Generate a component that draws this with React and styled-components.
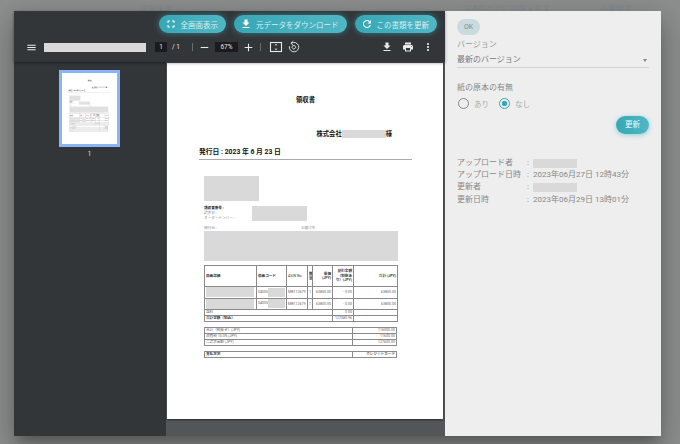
import styled, { createGlobalStyle } from "styled-components";
import {
  MdFullscreen,
  MdFileDownload,
  MdRefresh,
  MdMenu,
  MdRemove,
  MdAdd,
  MdPrint,
  MdMoreVert,
} from "react-icons/md";

const GlobalStyle = createGlobalStyle`
  html, body {
    margin: 0;
    padding: 0;
    width: 680px;
    height: 444px;
    overflow: hidden;
    background: #8d8f8f;
    font-family: Roboto, "Noto Sans CJK JP", sans-serif;
  }
  * { box-sizing: border-box; }
`;

const FitIcon = () => (
  <svg width="14" height="14" viewBox="0 0 14 14" fill="none" stroke="#e8eaed" strokeWidth="1.1">
    <rect x="1.5" y="2.5" width="11" height="9" />
    <path d="M7 3.8 L5.6 5.3 H8.4 Z M7 10.2 L5.6 8.7 H8.4 Z" fill="#e8eaed" stroke="none" />
  </svg>
);

const RotateIcon = () => (
  <svg width="14" height="14" viewBox="0 0 14 14" fill="none" stroke="#e8eaed" strokeWidth="0.9">
    <path d="M4.4 3.2 A4.7 4.7 0 1 1 2.4 6.2" />
    <path d="M6.2 1.2 L3.9 3.2 L6 5" />
    <path d="M6.8 5 L8.9 7.2 L6.8 9.4 L4.7 7.2 Z" />
  </svg>
);

const ReceiptPage = () => (
  <Sheet>
    <DocTitle>領収書</DocTitle>
    <CompanyRow>
      株式会社<Masked $w={44} $h={8} />様
    </CompanyRow>
    <IssueDate>発行日 : 2023 年 6 月 23 日</IssueDate>
    <Rule />
    <Indented>
      <Masked $w={55} $h={25} />
      <OrderRow>
        <OrderLabels>
          <b>領収書番号 :</b>
          <span>請求日 :</span>
          <span>オーダーナンバー :</span>
        </OrderLabels>
        <Masked $w={55} $h={15} />
      </OrderRow>
      <AddressLabels>
        <span>発行元 :</span>
        <span>お届け先 :</span>
      </AddressLabels>
      <Masked $w={194} $h={30} />
      <ItemTable>
        <colgroup>
          <col style={{ width: 52 }} />
          <col style={{ width: 30 }} />
          <col style={{ width: 21 }} />
          <col style={{ width: 5 }} />
          <col style={{ width: 20 }} />
          <col style={{ width: 21 }} />
          <col style={{ width: 44 }} />
        </colgroup>
        <tbody>
          <HeadRow>
            <th>商品詳細</th>
            <th>商品コード</th>
            <NormalTh>ASIN No.</NormalTh>
            <th>数量</th>
            <RightTh>単価 (JPY)</RightTh>
            <RightTh>割引金額（税抜あり）(JPY)</RightTh>
            <RightTh>合計 (JPY)</RightTh>
          </HeadRow>
          {[0, 1].map((i) => (
            <ItemRow key={i}>
              <td><Masked $w={48} $h={10} /></td>
              <td>04005<Masked $w={17} $h={9} $inline /></td>
              <td>MB112679</td>
              <td>1</td>
              <Num>63800.00</Num>
              <Num>- 0.00</Num>
              <Num>63800.00</Num>
            </ItemRow>
          ))}
          <SumRow>
            <td colSpan={5}>送料</td>
            <Num>0.00</Num>
            <td />
          </SumRow>
          <SumRow>
            <BoldCell colSpan={5}>合計金額（税込）</BoldCell>
            <Num>127580.96</Num>
            <td />
          </SumRow>
        </tbody>
      </ItemTable>
      <TotalTable>
        <tbody>
          <SumRow><td>合計（税抜き）(JPY)</td><TotalNum>116000.00</TotalNum></SumRow>
          <SumRow><td>消費税 10.0% (JPY)</td><TotalNum>11600.00</TotalNum></SumRow>
          <SumRow><td>ご請求金額 (JPY)</td><TotalNum>127600.00</TotalNum></SumRow>
        </tbody>
      </TotalTable>
      <PayTable>
        <tbody>
          <SumRow><BoldCell>支払方法</BoldCell><TotalNum><b>クレジットカード</b></TotalNum></SumRow>
        </tbody>
      </PayTable>
    </Indented>
  </Sheet>
);

const App = () => (
  <>
    <GlobalStyle />
    <BehindBar>
      <BehindText $x={140}>収発水用</BehindText>
      <BehindText $x={462}>決済前の対応内訳メモス</BehindText>
      <BehindText $x={600}>小泉智子</BehindText>
    </BehindBar>
    <Modal>
      <Viewer>
        <FloatingActions>
          <ActionButton><MdFullscreen size={12} /><span>全画面表示</span></ActionButton>
          <ActionButton><MdFileDownload size={12} /><span>元データをダウンロード</span></ActionButton>
          <ActionButton><MdRefresh size={12} /><span>この書類を更新</span></ActionButton>
        </FloatingActions>
        <Toolbar>
          <ToolLeft>
            <MdMenu size={11} />
            <TitleMask />
            <PageInput>1</PageInput>
            <PageCount>/ 1</PageCount>
            <Divider />
            <MdRemove size={13} />
            <ZoomInput>67%</ZoomInput>
            <MdAdd size={13} />
            <Divider $short />
            <FitIcon />
            <RotateIcon />
          </ToolLeft>
          <ToolRight>
            <MdFileDownload size={12} />
            <MdPrint size={12} />
            <MdMoreVert size={12} />
          </ToolRight>
        </Toolbar>
        <ViewerBody>
          <ThumbPane>
            <Thumb>
              <ThumbScale>
                <ReceiptPage />
              </ThumbScale>
            </Thumb>
            <ThumbNumber>1</ThumbNumber>
          </ThumbPane>
          <PageArea>
            <ReceiptPage />
          </PageArea>
        </ViewerBody>
      </Viewer>
      <SidePanel>
        <OkChip>OK</OkChip>
        <FieldLabel>バージョン</FieldLabel>
        <SelectBox>
          <span>最新のバージョン</span>
          <Caret />
        </SelectBox>
        <RadioLabel>紙の原本の有無</RadioLabel>
        <RadioRow>
          <Radio />
          <RadioText>あり</RadioText>
          <Radio $on />
          <RadioText>なし</RadioText>
        </RadioRow>
        <UpdateRow>
          <UpdateButton>更新</UpdateButton>
        </UpdateRow>
        <InfoGrid>
          <span>アップロード者</span><span>:</span><Masked $w={44} $h={9} />
          <span>アップロード日時</span><span>:</span><span>2023年06月27日 12時43分</span>
          <span>更新者</span><span>:</span><Masked $w={44} $h={9} />
          <span>更新日時</span><span>:</span><span>2023年06月29日 13時01分</span>
        </InfoGrid>
      </SidePanel>
    </Modal>
  </>
);

export default App;

const BehindBar = styled.div`
  position: relative;
  height: 11px;
`;

const BehindText = styled.span`
  position: absolute;
  top: 5px;
  left: ${(p) => p.$x}px;
  font-size: 8px;
  line-height: 10px;
  color: #7d8a8c;
  white-space: nowrap;
`;

const Modal = styled.div`
  position: absolute;
  left: 14px;
  top: 11px;
  width: 647px;
  height: 425px;
  display: flex;
  box-shadow: 0 8px 10px -5px rgba(0, 0, 0, 0.25), 0 16px 24px 2px rgba(0, 0, 0, 0.16),
    0 6px 30px 5px rgba(0, 0, 0, 0.12);
`;

const Viewer = styled.div`
  position: relative;
  width: 431px;
  display: flex;
  flex-direction: column;
  background: #525659;
`;

const FloatingActions = styled.div`
  position: absolute;
  top: 4px;
  right: 8px;
  display: flex;
  gap: 8px;
  z-index: 2;
`;

const ActionButton = styled.div`
  height: 18px;
  padding: 0 8px 0 6px;
  display: flex;
  align-items: center;
  gap: 4px;
  border-radius: 9px;
  background: linear-gradient(90deg, #37a7b6, #50b7c4);
  box-shadow: 0 0 6px rgba(64, 180, 195, 0.55);
  color: #d8eff2;
  font-size: 7.5px;
  white-space: nowrap;
  svg {
    color: #fff;
  }
`;

const Toolbar = styled.div`
  height: 51px;
  padding: 29px 11px 0 12px;
  display: flex;
  align-items: flex-start;
  justify-content: space-between;
  background: #323639;
  color: #e8eaed;
  box-shadow: 0 1px 3px rgba(0, 0, 0, 0.4);
  z-index: 1;
  svg {
    flex: none;
  }
`;

const ToolLeft = styled.div`
  display: flex;
  align-items: center;
  height: 14px;
  svg:nth-of-type(4) {
    margin-left: 3px;
  }
  svg:nth-of-type(5) {
    margin-left: 4px;
  }
`;

const ToolRight = styled.div`
  display: flex;
  align-items: center;
  height: 14px;
  gap: 8.5px;
`;

const TitleMask = styled.div`
  width: 102px;
  height: 9px;
  margin-left: 7px;
  background: #d9d9d9;
`;

const PageInput = styled.div`
  width: 12px;
  height: 10px;
  margin-left: 9px;
  background: #191b1c;
  font-size: 6.5px;
  line-height: 10px;
  text-align: center;
`;

const PageCount = styled.div`
  width: 12px;
  margin-left: 3px;
  font-size: 6.5px;
  text-align: center;
`;

const Divider = styled.div`
  width: 1px;
  height: 8px;
  margin: 0 5px 0 ${(p) => (p.$short ? 5 : 10)}px;
  background: #6a6e71;
`;

const ZoomInput = styled.div`
  width: 23px;
  height: 10px;
  margin: 0 4px;
  background: #191b1c;
  font-size: 6.5px;
  line-height: 10px;
  text-align: center;
`;

const ViewerBody = styled.div`
  flex: 1;
  min-height: 0;
  display: flex;
`;

const ThumbPane = styled.div`
  width: 152px;
  padding: 8px 1px 0 0;
  display: flex;
  flex-direction: column;
  align-items: center;
  background: #323639;
`;

const Thumb = styled.div`
  width: 61px;
  height: 77px;
  border: 3px solid #8ab4f8;
  background: #fff;
  overflow: hidden;
`;

const ThumbScale = styled.div`
  width: 276px;
  height: 356px;
  opacity: 0.8;
  transform: scale(0.2);
  transform-origin: 0 0;
`;

const ThumbNumber = styled.div`
  margin-top: 3px;
  color: #d5d8da;
  font-size: 7px;
  line-height: 9px;
`;

const PageArea = styled.div`
  flex: 1;
  padding: 1px 2px 0 1px;
`;

const Sheet = styled.div`
  width: 276px;
  height: 356px;
  padding: 33px 31px 0 32px;
  background: #fff;
  color: #222;
  box-shadow: 0 1px 2px rgba(0, 0, 0, 0.5);
  overflow: hidden;
`;

const DocTitle = styled.div`
  height: 8px;
  width: 213px;
  text-align: center;
  font-size: 6.3px;
  line-height: 8px;
  font-weight: 700;
  color: #111;
`;

const CompanyRow = styled.div`
  margin: 26px 20px 0 0;
  height: 8px;
  display: flex;
  justify-content: flex-end;
  font-size: 6.3px;
  line-height: 8px;
  font-weight: 700;
  color: #111;
`;

const IssueDate = styled.div`
  margin-top: 10px;
  height: 8px;
  font-size: 6.8px;
  line-height: 8px;
  font-weight: 700;
  color: #111;
`;

const Rule = styled.div`
  margin-top: 3px;
  height: 1px;
  background: #aaa;
`;

const Indented = styled.div`
  margin: 16px 0 0 5px;
`;

const Masked = styled.div`
  display: ${(p) => (p.$inline ? "inline-block" : "block")};
  vertical-align: middle;
  width: ${(p) => p.$w}px;
  height: ${(p) => p.$h}px;
  flex: none;
  background: #d9d9d9;
`;

const OrderRow = styled.div`
  margin-top: 5px;
  display: flex;
`;

const OrderLabels = styled.div`
  width: 48px;
  display: flex;
  flex-direction: column;
  font-size: 3.6px;
  line-height: 5px;
  color: #888;
  b {
    color: #222;
  }
`;

const AddressLabels = styled.div`
  margin-top: 4px;
  height: 6px;
  display: grid;
  grid-template-columns: 97px 1fr;
  font-size: 3.6px;
  line-height: 6px;
  color: #888;
`;

const BaseTable = styled.table`
  border-collapse: collapse;
  table-layout: fixed;
  width: 193px;
  font-size: 3.6px;
  line-height: 4.4px;
  color: #666;
  td, th {
    border: 1px solid #8a8a8a;
    padding: 0 1px;
    overflow: hidden;
    white-space: nowrap;
  }
`;

const ItemTable = styled(BaseTable)`
  margin-top: 4px;
  th {
    font-weight: 700;
    color: #333;
    text-align: left;
    white-space: normal;
  }
`;

const HeadRow = styled.tr`
  height: 21px;
`;

const NormalTh = styled.th`
  && {
    font-weight: 400;
  }
`;

const RightTh = styled.th`
  && {
    text-align: right;
  }
`;

const ItemRow = styled.tr`
  height: 11.5px;
`;

const SumRow = styled.tr`
  height: 6px;
`;

const Num = styled.td`
  text-align: right;
`;

const BoldCell = styled.td`
  font-weight: 700;
  color: #333;
`;

const TotalTable = styled(BaseTable)`
  margin-top: 5px;
`;

const PayTable = styled(BaseTable)`
  margin-top: 5px;
`;

const TotalNum = styled.td`
  width: 44px;
  text-align: right;
`;

const SidePanel = styled.div`
  flex: 1;
  padding: 8px 12px 0;
  background: #eeeeee;
  color: #8c8c8c;
  font-size: 8px;
`;

const OkChip = styled.div`
  width: 23px;
  height: 16px;
  border-radius: 8px;
  background: #c8dbde;
  color: #888;
  font-size: 7px;
  line-height: 16px;
  text-align: center;
`;

const FieldLabel = styled.div`
  margin-top: 5px;
  line-height: 10px;
  color: #999;
`;

const SelectBox = styled.div`
  margin-top: 4px;
  height: 14px;
  padding-right: 2px;
  display: flex;
  align-items: flex-start;
  justify-content: space-between;
  border-bottom: 1px solid #d4d4d4;
  line-height: 11px;
  color: #777;
`;

const Caret = styled.i`
  margin-top: 5px;
  width: 0;
  height: 0;
  border-left: 2.5px solid transparent;
  border-right: 2.5px solid transparent;
  border-top: 3px solid #888;
`;

const RadioLabel = styled.div`
  margin-top: 14px;
  line-height: 11px;
  color: #888;
`;

const RadioRow = styled.div`
  margin-top: 5px;
  margin-left: 1px;
  display: flex;
  align-items: center;
  height: 11px;
`;

const Radio = styled.div`
  width: 11px;
  height: 11px;
  flex: none;
  border-radius: 50%;
  border: 1.2px solid ${(p) => (p.$on ? "#36a8b7" : "#888")};
  background: ${(p) =>
    p.$on ? "radial-gradient(circle, #36a8b7 0 2.6px, transparent 3px)" : "transparent"};
`;

const RadioText = styled.span`
  width: 30px;
  padding-left: 5px;
  color: #aaa;
  font-size: 7.5px;
  white-space: nowrap;
`;

const UpdateRow = styled.div`
  margin-top: 7px;
  display: flex;
  justify-content: flex-end;
`;

const UpdateButton = styled.div`
  width: 33px;
  height: 18px;
  border-radius: 9px;
  background: linear-gradient(90deg, #37a7b6, #50b7c4);
  box-shadow: 0 1px 5px rgba(64, 180, 195, 0.55);
  color: #f2fafb;
  font-size: 7.5px;
  line-height: 18px;
  text-align: center;
`;

const InfoGrid = styled.div`
  margin-top: 23px;
  display: grid;
  grid-template-columns: 70px 6px 1fr;
  grid-auto-rows: 12.2px;
  align-items: center;
  line-height: 12px;
  color: #888;
  white-space: nowrap;
`;
